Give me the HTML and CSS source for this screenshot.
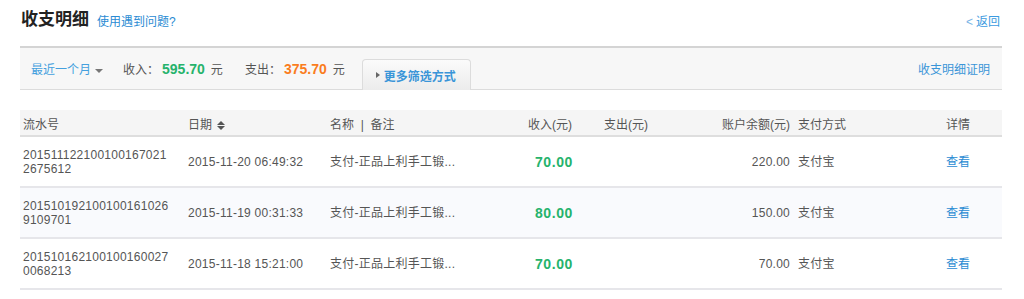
FILE: index.html
```html
<!DOCTYPE html>
<html lang="zh-CN">
<head>
  <meta charset="UTF-8">
  <title>收支明细</title>
  <link rel="stylesheet" href="styles.css">
</head>
<body>
  <div class="page">
    <div class="top">
      <div class="title">收支明细</div>
      <a class="help" href="#">使用遇到问题?</a>
      <a class="back" href="#"><span class="lt">&lt;</span>返回</a>
    </div>

    <div class="filter">
      <a class="range" href="#">最近一个月<span class="caret"></span></a>
      <span class="label first">收入：</span><b class="in">595.70</b><span class="unit">元</span>
      <span class="label">支出：</span><b class="out">375.70</b><span class="unit">元</span>
      <a class="more" href="#"><span class="tri"></span>更多筛选方式</a>
      <a class="proof" href="#">收支明细证明</a>
    </div>

    <table class="list">
      <colgroup>
        <col style="width:165px"><col style="width:142px"><col style="width:143px"><col style="width:105px">
        <col style="width:76px"><col style="width:144px"><col style="width:105px"><col style="width:102px">
      </colgroup>
      <thead>
        <tr>
          <th>流水号</th>
          <th>日期 <span class="sort"><i class="up"></i><i class="down"></i></span></th>
          <th>名称 &nbsp;|&nbsp; 备注</th>
          <th class="r">收入(元)</th>
          <th class="r">支出(元)</th>
          <th class="r">账户余额(元)</th>
          <th>支付方式</th>
          <th class="r">详情</th>
        </tr>
      </thead>
      <tbody>
        <tr>
          <td class="no">2015111221001001670212675612</td>
          <td>2015-11-20 06:49:32</td>
          <td>支付-正品上利手工锻...</td>
          <td class="r amt">70.00</td>
          <td class="r"></td>
          <td class="r">220.00</td>
          <td>支付宝</td>
          <td class="r"><a href="#">查看</a></td>
        </tr>
        <tr>
          <td class="no">2015101921001001610269109701</td>
          <td>2015-11-19 00:31:33</td>
          <td>支付-正品上利手工锻...</td>
          <td class="r amt">80.00</td>
          <td class="r"></td>
          <td class="r">150.00</td>
          <td>支付宝</td>
          <td class="r"><a href="#">查看</a></td>
        </tr>
        <tr>
          <td class="no">2015101621001001600270068213</td>
          <td>2015-11-18 15:21:00</td>
          <td>支付-正品上利手工锻...</td>
          <td class="r amt">70.00</td>
          <td class="r"></td>
          <td class="r">70.00</td>
          <td>支付宝</td>
          <td class="r"><a href="#">查看</a></td>
        </tr>
      </tbody>
    </table>
  </div>
</body>
</html>
```

FILE: styles.css
```css
*{box-sizing:border-box;margin:0;padding:0}
body{font-family:"Liberation Sans","Noto Sans CJK SC",sans-serif;font-size:12px;color:#555;background:#fff}
a{text-decoration:none;color:#2a8bd3}
.page{padding:0 22px 0 20px}

.top{display:flex;align-items:center;height:40px;padding-left:1px}
.top .title{font-size:17px;line-height:20px;color:#222;font-weight:bold;margin-right:8px}
.top .help{font-size:12px}
.top .back{margin-left:auto;margin-right:2px;color:#3c9be0}
.top .lt{margin-right:3px;color:#7ab4e6}

.filter{display:flex;align-items:center;height:44px;margin-top:6px;background:#f7f7f7;border-top:2px solid #d4d4d4;border-bottom:1px solid #dcdcdc;padding-left:11px}
.range{color:#44a0de}
.caret{display:inline-block;margin-left:4px;vertical-align:middle;border-left:4px solid transparent;border-right:4px solid transparent;border-top:4px solid #777}
.label{margin-left:22px;color:#555}
.label.first{margin-left:20px}
.in,.out{font-size:14px;margin-left:3px}
.in{color:#26b36c}
.out{color:#fa7d1e}
.unit{margin-left:6px;color:#555}
.more{align-self:flex-end;height:31px;margin-left:17px;margin-bottom:-1px;width:109px;display:flex;align-items:center;padding-left:13px;border:1px solid #dcdcdc;border-bottom:none;border-radius:4px 4px 0 0;background:linear-gradient(#fbfbfb,#ececec);color:#3a95d8;font-weight:bold}
.tri{display:inline-block;margin-right:4px;border-top:3px solid transparent;border-bottom:3px solid transparent;border-left:4px solid #666}
.proof{margin-left:auto;margin-right:12px;color:#3a95d8}

.list{width:982px;margin-top:20px;border-collapse:collapse;table-layout:fixed}
.list th{height:26px;background:#f5f5f5;font-weight:normal;text-align:left;padding:1px 3px 0;color:#555;border-bottom:2px solid #dedede}
.list td{height:51px;padding:0 3px;border-bottom:2px solid #e6e6ea;color:#555;line-height:14px;letter-spacing:.25px}
.list tbody tr:nth-child(2) td{background:#f9fafd}
.list .r{text-align:right}
.list th:last-child,.list td:last-child{padding-right:32px}
.list td:nth-child(6),.list th:nth-child(6){padding-right:5px}
.list .no{word-break:break-all;padding-right:12px}
.list .amt{color:#26b36c;font-weight:bold;font-size:14px;letter-spacing:.6px;padding-right:2px}
.list td a{letter-spacing:0}
.sort{display:inline-flex;flex-direction:column;gap:1px;vertical-align:middle;margin-left:2px}
.sort i{display:block;border-left:4px solid transparent;border-right:4px solid transparent}
.sort .up{border-bottom:4px solid #555}
.sort .down{border-top:4px solid #555}
```
